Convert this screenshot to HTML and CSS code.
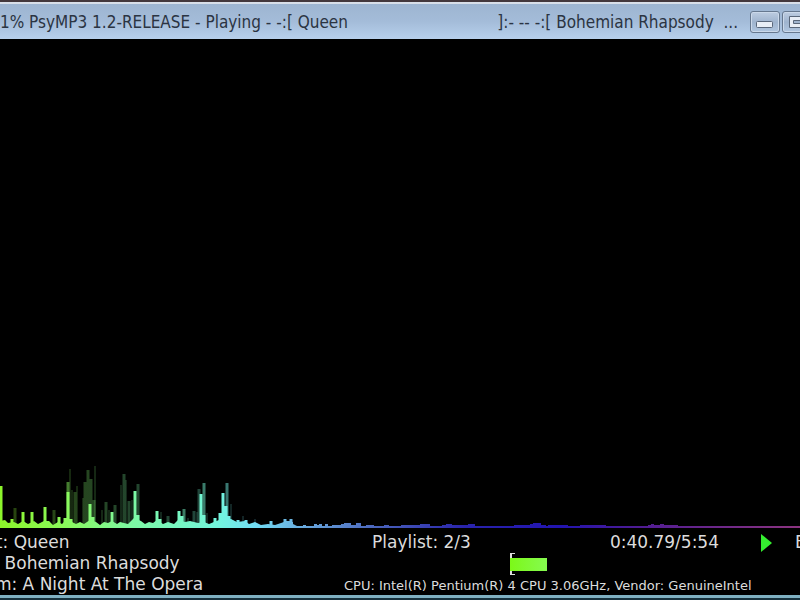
FILE: index.html
```html
<!DOCTYPE html>
<html lang="en">
<head>
    <meta charset="UTF-8">
    <title>PsyMP3</title>
    <link rel="stylesheet" href="styles.css">
</head>
<body>
    <div class="window">
        <header class="titlebar">
            <span class="title-status">1% PsyMP3 1.2-RELEASE - Playing - -:[ Queen</span>
            <span class="title-track">]:- -- -:[ Bohemian Rhapsody&nbsp; ...</span>
            <button class="win-btn" aria-label="Minimize">
                <svg width="28" height="20" viewBox="0 0 28 20"><rect x="5.5" y="9.500" width="16" height="6" rx="1" fill="#e8eef6" stroke="#59677a"/></svg>
            </button>
            <button class="win-btn" aria-label="Maximize">
                <svg width="28" height="20" viewBox="0 0 28 20"><path d="M6.500 4.500H21.500V15.500H6.500ZM10.500 8.500V11.500H17.500V8.500Z" fill="#e8eef6" fill-rule="evenodd" stroke="#59677a"/></svg>
            </button>
        </header>

        <main class="screen">
            <svg class="spectrum" viewBox="0 0 800 69" preserveAspectRatio="none">
                <defs>
                    <linearGradient id="hue" gradientUnits="userSpaceOnUse" x1="0" y1="0" x2="800" y2="0">
                        <stop offset="0" stop-color="#8cf52a"/>
                        <stop offset="0.08" stop-color="#8af95a"/>
                        <stop offset="0.16" stop-color="#7df8a0"/>
                        <stop offset="0.27" stop-color="#72f6dc"/>
                        <stop offset="0.32" stop-color="#72dcf4"/>
                        <stop offset="0.38" stop-color="#68a8dc"/>
                        <stop offset="0.47" stop-color="#4a64bc"/>
                        <stop offset="0.58" stop-color="#2a24ac"/>
                        <stop offset="0.7" stop-color="#2214b0"/>
                        <stop offset="0.8" stop-color="#501c94"/>
                        <stop offset="1" stop-color="#8c3480"/>
                    </linearGradient>
                </defs>
                <!-- decaying peaks -->
                <g fill="none" stroke="url(#hue)">
                    <path stroke-width="3" opacity="0.28" d="M75 67V32M85 67V22M88 67V10M91 67V19M124 67V14M129 67V41M138 67V24M15 67V48M54 67V50M115 67V45M106 67V42M199 67V29M94 67V40M168 67V56M194 67V51"/>
                    <path stroke-width="2" opacity="0.16" d="M70 67V9M77 67V26M72 67V30M95 67V6M83 67V38M121 67V25M126 67V20M102 67V50M109 67V50M132 67V40M161 67V52M188 67V58M197 67V52M207 67V53M231 67V44M243 67V56M255 67V59"/>
                    <path stroke-width="3" opacity="0.5" d="M204 67V23M227 67V23M68 67V22M184 67V49"/>
                </g>
                <!-- current levels -->
                <path fill="none" stroke="url(#hue)" stroke-width="3" d="M1 68V26M12 68V59M23 68V52M32 68V52M45 68V47M48 68V61M59 68V57M65 68V58M68 68V32M71 68V59M90 68V44M93 68V57M112 68V52M135 68V31M138 68V55M157 68V51M160 68V59M179 68V51M182 68V56M201 68V34M204 68V55M215 68V58M220 68V53M223 68V33M226 68V46M229 68V56M238 68V60M246 68V60M271 68V61M285 68V59M288 68V61M291 68V59"/>
                <path fill="url(#hue)" d="M0 68V61L5 60L8 63L14 62L18 64L23 61L28 64L34 61L38 64L44 61L50 62L53 65L58 62L62 64L66 60L72 62L76 64L80 62L84 64L90 60L96 62L100 65L104 62L108 63L112 61L117 64L120 62L128 64L134 58L141 61L145 64L149 62L153 63L157 60L163 64L168 62L174 64L178 60L185 62L190 61L198 63L204 62L209 64L219 60L231 59L237 62L245 61L249 64L255 62L261 65L268 64L275 65L284 62H293V64L297 66H303V65H306V66H314V64H317V65H319V64H322V66H325V64H328V66H332V65H341V64H344V63H351V65H356V63H361V66H366V65H374V66H384V65H389V66H401V65H420V64H430V66H442V65H446V64H452V65H468V64H475V66H514V65H530V64H533V63H541V65H546V66H548V65H568V66H580V65H606V66H648V65H651V64H654V65H660V64H664V65H678V66H800V68Z"/>
            </svg>
        </main>

        <footer class="status">
            <div class="tags">
                <div>Artist: Queen</div>
                <div>Title: Bohemian Rhapsody</div>
                <div>Album: A Night At The Opera</div>
            </div>
            <div class="transport">
                <div class="row">
                    <span class="playlist">Playlist: 2/3</span>
                    <span class="time">0:40.79/5:54</span>
                    <svg class="play" width="11" height="18" viewBox="0 0 11 18"><path d="M0 0L11 9L0 18Z" fill="#35ee30"/></svg>
                    <span class="beat">B</span>
                </div>
                <div class="progress">
                    <div class="progress-fill" style="width: 37px"></div>
                </div>
                <div class="cpu">CPU: Intel(R) Pentium(R) 4 CPU 3.06GHz, Vendor: GenuineIntel</div>
            </div>
        </footer>
    </div>
</body>
</html>
```

FILE: styles.css
```css
body {
    margin: 0;
    background: #000;
    color: #dcdcdc;
    font-family: "DejaVu Sans", sans-serif;
    font-size: 17px;
    overflow: hidden;
}

.window {
    display: flex;
    flex-direction: column;
    height: 100vh;
    box-sizing: border-box;
    border-top: 2px solid #43383d;
    border-bottom: 2px solid #16303c;
}

.titlebar {
    display: flex;
    align-items: center;
    flex: none;
    height: 37px;
    box-sizing: border-box;
    border-top: 2px solid #d8dfe9;
    background: linear-gradient(#9db5d1, #a4bcd9 50%, #b7d0ec);
    color: #2b3442;
    font-family: "DejaVu Sans Condensed", "DejaVu Sans", sans-serif;
    font-stretch: condensed;
    white-space: nowrap;
}

.title-status {
    flex: 1;
}

.title-track {
    margin-right: 12px;
}

.win-btn {
    flex: none;
    width: 30px;
    height: 22px;
    margin: 0 2px 0 0;
    padding: 0;
    border: 1px solid #66788f;
    border-radius: 3px;
    background: linear-gradient(#bdcde1, #9fb4ce 50%, #afc5df);
    box-shadow: inset 0 0 0 1px #cbd9ea;
}

.win-btn:last-child {
    margin-right: -12px;
}

.win-btn svg {
    display: block;
}

.screen {
    display: flex;
    flex: 1;
    align-items: flex-end;
    min-height: 0;
}

.spectrum {
    display: block;
    width: 100%;
    height: 69px;
}

.status {
    display: flex;
    flex: none;
    justify-content: space-between;
    height: 66px;
    border-bottom: 3px solid #7fb0c2;
    line-height: 21px;
    white-space: nowrap;
}

.tags {
    margin-left: -43px;
    padding-top: 3px;
}

.transport {
    width: 428px;
    padding-top: 3px;
}

.row {
    display: flex;
    align-items: center;
    height: 21px;
}

.playlist {
    flex: 1;
}

.time {
    margin-right: 42px;
}

.play {
    margin-right: 23px;
}

.beat {
    width: 5px;
    overflow: hidden;
}

.progress {
    width: 37px;
    height: 22px;
    margin-left: 138px;
    padding: 5px 0 4px;
    box-sizing: border-box;
    background: linear-gradient(#ddd, #ddd) 0 0 / 2px 100% no-repeat,
        linear-gradient(#ddd, #ddd) 0 0 / 5px 1px no-repeat,
        linear-gradient(#ddd, #ddd) 0 100% / 5px 1px no-repeat;
}

.progress-fill {
    height: 13px;
    background: linear-gradient(90deg, #7cf918, #86fa50);
}

.cpu {
    margin-left: -28px;
    font-size: 13px;
}
```
